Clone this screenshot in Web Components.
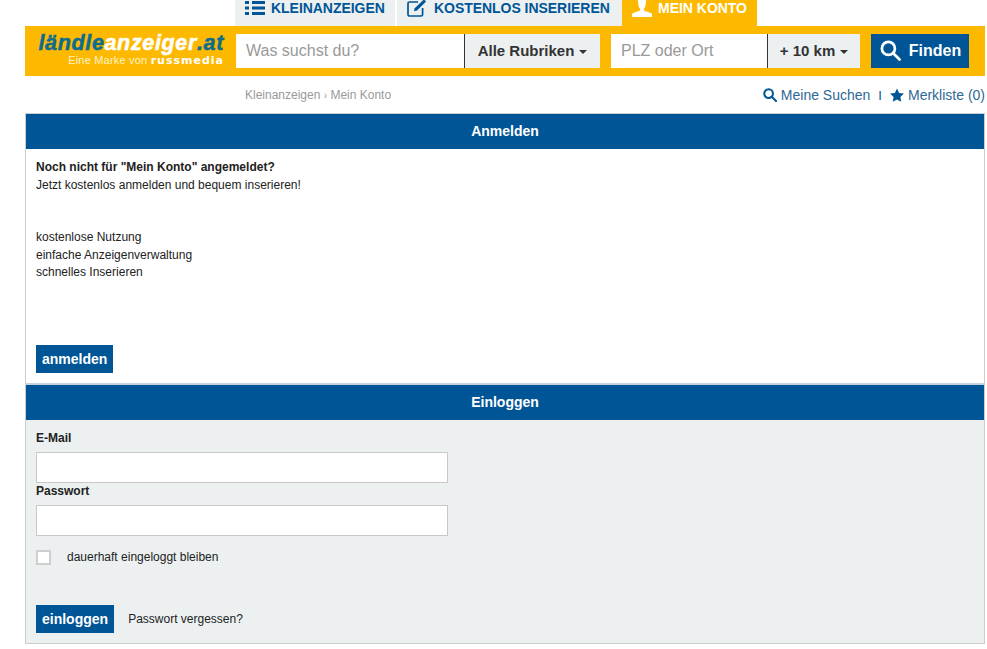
<!DOCTYPE html>
<html lang="de">
<head>
<meta charset="utf-8">
<title>Mein Konto</title>
<style>
    html, body { margin: 0; padding: 0; background: #fff; }
    body { font-family: "Liberation Sans", Arial, sans-serif; color: #222; height: 649px; overflow: hidden; }
</style>
</head>
<body>
<site-header></site-header>
<sub-bar></sub-bar>
<account-panel></account-panel>

<script>
const ICONS = {
    list: `<svg slot="icon" width="20" height="16" viewBox="0 0 20 16" fill="#005596"><rect x="0" y="1" width="4" height="3"/><rect x="7" y="1" width="13" height="3"/><rect x="0" y="6.5" width="4" height="3"/><rect x="7" y="6.5" width="13" height="3"/><rect x="0" y="12" width="4" height="3"/><rect x="7" y="12" width="13" height="3"/></svg>`,
    edit: `<svg slot="icon" width="20" height="18" viewBox="0 0 20 18" fill="none" stroke="#005596" stroke-width="1.7"><path d="M15.6 9v6.4a1.6 1.6 0 0 1-1.6 1.6H2.6A1.6 1.6 0 0 1 1 15.4V4.6A1.6 1.6 0 0 1 2.6 3H11"/><path d="M7 12.2l.7-2.9L16.9.4l2.2 2.2-9.100 8.900z" fill="#005596" stroke="none"/></svg>`,
    user: `<svg slot="icon" width="20" height="17" viewBox="0 0 20 17" fill="#fff"><path d="M5.800 0h8.400l-.7 5.500c-.2 1.500-.8 2.500-1.700 3.300v1.400c0 1 6.500 1.700 8.200 3.600V17H0v-3.200c1.700-1.900 8.200-2.600 8.200-3.600V8.800C7.300 8 6.700 7 6.500 5.500z"/></svg>`,
    search: (size, color, sw) => `<svg width="${size}" height="${size}" viewBox="0 0 20 20" fill="none" stroke="${color}" stroke-width="${sw}" stroke-linecap="round"><circle cx="8" cy="8" r="6.200"/><path d="M12.600 12.600l6 6"/></svg>`,
    star: `<svg width="14" height="14" viewBox="0 0 24 24" fill="#005596"><path d="M12 .8l3.600 7.600 8.200 1.100-6 5.800 1.500 8.300L12 19.600l-7.300 4 1.500-8.300-6-5.800 8.200-1.100z"/></svg>`
};

class SiteTab extends HTMLElement {
    constructor() {
        super();
        this.attachShadow({ mode: 'open' });
        this.shadowRoot.innerHTML = `
            <style>
                :host {
                    display: flex;
                    align-items: center;
                    gap: 6px;
                    height: 26px;
                    box-sizing: border-box;
                    padding: 0 0 10px 10px;
                    background: #ecf0f1;
                    color: #005596;
                    font-size: 14px;
                    font-weight: bold;
                    white-space: nowrap;
                    letter-spacing: -.04px;
                }
                :host([active]) { background: #fdb900; color: #fff; letter-spacing: -.02px; }
                ::slotted(svg) { flex: none; }
            </style>
            <slot name="icon"></slot><slot></slot>
        `;
    }
}

class SearchBar extends HTMLElement {
    constructor() {
        super();
        this.attachShadow({ mode: 'open' });
        this.shadowRoot.innerHTML = `
            <style>
                :host { display: flex; height: 50px; box-sizing: border-box; margin: 0 2px 0 25px; padding: 8px 16px 8px 0; background: #fdb900; }
                .logo { width: 211px; flex: none; display: flex; flex-direction: column; align-items: flex-end; padding-right: 12px; box-sizing: border-box; }
                .name { font: italic bold 21.500px/19px "Liberation Sans", Arial, sans-serif; color: #fff; letter-spacing: .65px; -webkit-text-stroke: .5px currentColor; white-space: nowrap; }
                .name b { color: #0e6c8e; }
                .claim { font-size: 11px; line-height: 12px; color: #fff3c9; margin-top: 1px; white-space: nowrap; letter-spacing: .2px; }
                .claim b { font-family: "DejaVu Sans", sans-serif; font-size: 11px; letter-spacing: 1px; color: #fff; }
                .field { background: #fff; color: #999; font-size: 16px; display: flex; align-items: center; padding: 0 0 1px 10px; box-sizing: border-box; }
                .drop { background: #ecf0f1; border-left: 1px solid #333; color: #333; font-size: 15px; font-weight: bold; display: flex; align-items: center; justify-content: center; gap: 5px; box-sizing: border-box; padding-bottom: 1px; }
                .caret { width: 0; height: 0; border: 4px solid transparent; border-top-color: #333; border-bottom: 0; margin-top: 3px; }
                .go { background: #005596; color: #fff; font-size: 16px; font-weight: bold; width: 98px; margin-left: 11px; display: flex; align-items: center; justify-content: center; gap: 8px; padding: 0 0 1px 1px; box-sizing: border-box; }
            </style>
            <div class="logo">
                <div class="name"><b>ländle</b>anzeiger<b>.at</b></div>
                <div class="claim">Eine Marke von <b>russmedia</b></div>
            </div>
            <div class="field" style="width:228px">Was suchst du?</div>
            <div class="drop" style="width:136px">Alle Rubriken <span class="caret"></span></div>
            <div class="field" style="width:156px;margin-left:11px">PLZ oder Ort</div>
            <div class="drop" style="width:93px">+ 10 km <span class="caret"></span></div>
            <div class="go">${ICONS.search(21, '#fff', 2.600)}Finden</div>
        `;
    }
}

class SiteHeader extends HTMLElement {
    constructor() {
        super();
        this.attachShadow({ mode: 'open' });
        this.shadowRoot.innerHTML = `
            <style>
                :host { display: block; }
                nav { display: flex; padding-left: 235px; height: 26px; }
            </style>
            <nav>
                <site-tab style="width:160px;margin-right:2px">${ICONS.list}KLEINANZEIGEN</site-tab>
                <site-tab style="width:225px;gap:7px">${ICONS.edit}KOSTENLOS INSERIEREN</site-tab>
                <site-tab active style="width:135px">${ICONS.user}MEIN KONTO</site-tab>
            </nav>
            <search-bar></search-bar>
        `;
    }
}

class SubBar extends HTMLElement {
    constructor() {
        super();
        this.attachShadow({ mode: 'open' });
        this.shadowRoot.innerHTML = `
            <style>
                :host { display: flex; justify-content: space-between; align-items: center; height: 37px; padding: 1px 2px 0 245px; box-sizing: border-box; font-size: 12px; color: #999; }
                .links { display: flex; align-items: center; color: #2f6795; font-size: 14px; }
                .links svg { margin-right: 4px; }
                .sep { margin: 0 8px; font-size: 13px; color: #005596; }
                small { font-size: 10px; }
            </style>
            <div>Kleinanzeigen <small>›</small> Mein Konto</div>
            <div class="links">${ICONS.search(14, '#005596', 2.900)}Meine Suchen<span class="sep">I</span>${ICONS.star}Merkliste (0)</div>
        `;
    }
}

class PanelSection extends HTMLElement {
    constructor() {
        super();
        this.attachShadow({ mode: 'open' });
        this.shadowRoot.innerHTML = `
            <style>
                :host { display: block; }
                h2 { margin: 0; height: 35px; background: #005596; color: #fff; font-size: 14px; line-height: 35px; text-align: center; }
                .body { padding: 10px; }
            </style>
            <h2></h2>
            <div class="body"><slot></slot></div>
        `;
    }
    connectedCallback() {
        this.shadowRoot.querySelector("h2").textContent = this.getAttribute("heading");
    }
}

class BlueButton extends HTMLElement {
    constructor() {
        super();
        this.attachShadow({ mode: 'open' });
        this.shadowRoot.innerHTML = `
            <style>
                :host { display: block; width: fit-content; height: 28px; padding: 0 6px; background: #005596; color: #fff; font-size: 14px; font-weight: bold; line-height: 28px; }
            </style>
            <slot></slot>
        `;
    }
}

class AccountPanel extends HTMLElement {
    constructor() {
        super();
        this.attachShadow({ mode: 'open' });
        this.shadowRoot.innerHTML = `
            <style>
                :host { display: block; margin: 0 2px 0 25px; border: 1px solid #ccc; font-size: 12px; line-height: 17.500px; color: #222; }
                .top { height: 269px; }
                .bottom { background: #ecf0f1; }
                .rule { height: 2px; background: #c3d3e0; }
                p { margin: 0; }
                .intro { height: 70px; }
                .perks { height: 116px; }
                label { display: block; font-weight: bold; }
                .input { height: 31px; width: 412px; box-sizing: border-box; background: #fff; border: 1px solid #c8c8c8; margin-top: 4.500px; }
                .remember { display: flex; align-items: center; gap: 16px; margin-top: 12.500px; height: 18px; }
                .box { width: 15px; height: 15px; box-sizing: border-box; background: #fff; border: 2px solid #cfcfcf; }
                .actions { display: flex; align-items: center; gap: 14px; margin-top: 38.500px; }
                .forgot { padding-top: 1px; }
            </style>
            <div class="top">
                <panel-section heading="Anmelden">
                    <div class="intro"><p><b>Noch nicht für "Mein Konto" angemeldet?</b></p><p>Jetzt kostenlos anmelden und bequem inserieren!</p></div>
                    <div class="perks"><p>kostenlose Nutzung</p><p>einfache Anzeigenverwaltung</p><p>schnelles Inserieren</p></div>
                    <blue-button>anmelden</blue-button>
                </panel-section>
            </div>
            <div class="rule"></div>
            <div class="bottom">
                <panel-section heading="Einloggen">
                    <label>E-Mail</label>
                    <div class="input"></div>
                    <label>Passwort</label>
                    <div class="input"></div>
                    <div class="remember"><span class="box"></span>dauerhaft eingeloggt bleiben</div>
                    <div class="actions"><blue-button>einloggen</blue-button><span class="forgot">Passwort vergessen?</span></div>
                </panel-section>
            </div>
        `;
    }
}

customElements.define("site-tab", SiteTab);
customElements.define("search-bar", SearchBar);
customElements.define("site-header", SiteHeader);
customElements.define("sub-bar", SubBar);
customElements.define("panel-section", PanelSection);
customElements.define("blue-button", BlueButton);
customElements.define("account-panel", AccountPanel);
</script>
</body>
</html>
